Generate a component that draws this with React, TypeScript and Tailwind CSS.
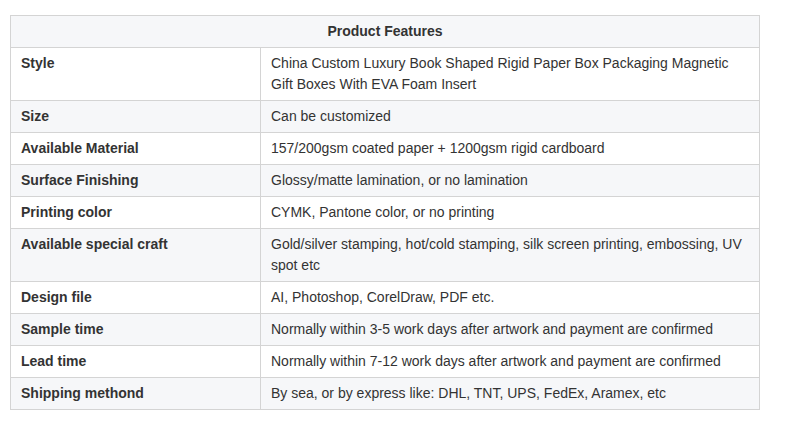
const rows: [string, string][] = [
  ["Style", "China Custom Luxury Book Shaped Rigid Paper Box Packaging Magnetic Gift Boxes With EVA Foam Insert"],
  ["Size", "Can be customized"],
  ["Available Material", "157/200gsm coated paper + 1200gsm rigid cardboard"],
  ["Surface Finishing", "Glossy/matte lamination, or no lamination"],
  ["Printing color", "CYMK, Pantone color, or no printing"],
  ["Available special craft", "Gold/silver stamping, hot/cold stamping, silk screen printing, embossing, UV spot etc"],
  ["Design file", "AI, Photoshop, CorelDraw, PDF etc."],
  ["Sample time", "Normally within 3-5 work days after artwork and payment are confirmed"],
  ["Lead time", "Normally within 7-12 work days after artwork and payment are confirmed"],
  ["Shipping methond", "By sea, or by express like: DHL, TNT, UPS, FedEx, Aramex, etc"],
];

export default function App() {
  return (
    <div className="bg-white min-h-[424px] pt-[15px] pl-[10px] font-['Liberation_Sans',Arial,sans-serif] text-[14px] leading-[21px] text-[#333]">
      <table className="w-[750px] border-collapse border border-[#d4d4d4]">
        <thead>
          <tr className="bg-[#f6f7f9]">
            <th colSpan={2} className="border border-[#d4d4d4] px-[10px] py-[5px] text-center font-bold">
              Product Features
            </th>
          </tr>
        </thead>
        <tbody>
          {rows.map(([label, value], i) => (
            <tr key={label} className={i % 2 === 1 ? "bg-[#f6f7f9]" : "bg-white"}>
              <td className="w-[250px] border border-[#d4d4d4] px-[10px] py-[5px] align-top font-bold">{label}</td>
              <td className="border border-[#d4d4d4] px-[10px] py-[5px] align-top">{value}</td>
            </tr>
          ))}
        </tbody>
      </table>
    </div>
  );
}
